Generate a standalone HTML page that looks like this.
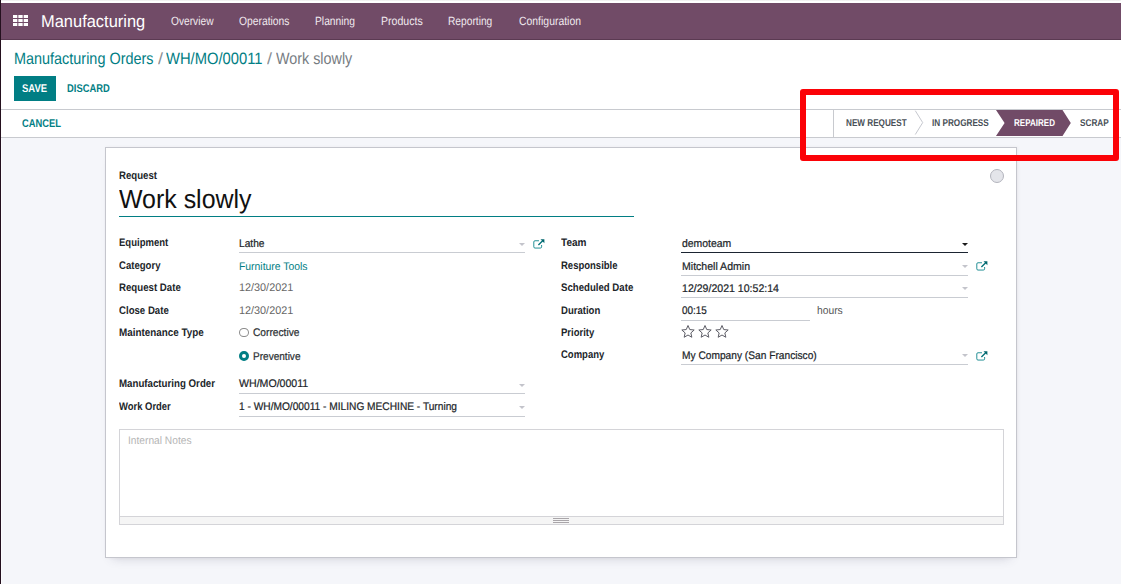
<!DOCTYPE html>
<html><head><meta charset="utf-8"><title>Odoo - Work slowly</title>
<style>
html,body{margin:0;padding:0}
body{width:1121px;height:584px;overflow:hidden;position:relative;background:#f5f6fa;font-family:"Liberation Sans",sans-serif}
.a{position:absolute;box-sizing:border-box}
.t{position:absolute;transform-origin:0 0;text-rendering:geometricPrecision;white-space:nowrap;line-height:normal;font-family:"Liberation Sans",sans-serif}
</style></head><body>
<!-- top strip -->
<div class="a" style="left:0;top:0;width:1121px;height:3px;background:linear-gradient(#e9e9e9,#fff 45%,#fff)"></div>
<!-- navbar -->
<div class="a" style="left:0;top:3px;width:1121px;height:37px;background:#714B67;border-bottom:1px solid #5b3a52"></div>
<!-- apps icon -->
<svg class="a" style="left:13px;top:15px" width="16" height="12" viewBox="0 0 16 12"><g fill="#fff"><rect x="0" y="0" width="4.3" height="3"/><rect x="5.35" y="0" width="4.3" height="3"/><rect x="10.7" y="0" width="4.3" height="3"/><rect x="0" y="4" width="4.3" height="3"/><rect x="5.35" y="4" width="4.3" height="3"/><rect x="10.7" y="4" width="4.3" height="3"/><rect x="0" y="8" width="4.3" height="3"/><rect x="5.35" y="8" width="4.3" height="3"/><rect x="10.7" y="8" width="4.3" height="3"/></g></svg>
<div class="a" style="left:1px;top:40px;width:1px;height:544px;background:rgba(255,255,255,.7)"></div>
<!-- control panel -->
<div class="a" style="left:0;top:40px;width:1121px;height:70px;background:#fff;border-bottom:1px solid #c8cacf"></div>
<div class="a" style="left:14px;top:76px;width:42px;height:25px;background:#017e84"></div>
<!-- statusbar -->
<div class="a" style="left:0;top:110px;width:1121px;height:28px;background:#fff;border-bottom:1px solid #c8cacf"></div>
<div class="a" style="left:833px;top:110px;width:1px;height:27px;background:#c8cacf"></div>
<svg class="a" style="left:833px;top:109px" width="288" height="29" viewBox="0 0 288 29">
<polyline points="82.3,1.7 89.7,13.6 82.3,25.5" fill="none" stroke="#c6c8cf" stroke-width="1"/>
<polygon points="163,1 229.5,1 237.8,14 229.5,27 163,27 171.6,14" fill="#714B67"/>
</svg>
<!-- sheet -->
<div class="a" style="left:105px;top:147px;width:912px;height:411px;background:#fff;border:1px solid #c5c6cd;box-shadow:0 7px 10px -7px rgba(60,60,90,.22),1px 0 3px rgba(110,100,90,.07)"></div>
<!-- kanban state circle -->
<div class="a" style="left:990px;top:169px;width:14px;height:14px;border-radius:50%;background:#e4e5ea;border:1px solid #b3b4bd"></div>
<!-- title underline -->
<div class="a" style="left:119px;top:216px;width:515px;height:1px;background:#017e84"></div>
<!-- left field underlines -->
<div class="a" style="left:239px;top:252px;width:286px;height:1px;background:#c9ccd2"></div>
<div class="a" style="left:239px;top:393px;width:286px;height:1px;background:#c9ccd2"></div>
<div class="a" style="left:239px;top:416px;width:286px;height:1px;background:#c9ccd2"></div>
<div class="a" style="left:519px;top:243px;width:0;height:0;border-left:3px solid transparent;border-right:3px solid transparent;border-top:3px solid #c3c4cb"></div>
<div class="a" style="left:519px;top:384px;width:0;height:0;border-left:3px solid transparent;border-right:3px solid transparent;border-top:3px solid #c3c4cb"></div>
<div class="a" style="left:519px;top:406px;width:0;height:0;border-left:3px solid transparent;border-right:3px solid transparent;border-top:3px solid #c3c4cb"></div>
<svg class="a" style="left:533px;top:238.5px" width="12" height="10" viewBox="0 0 12 10"><path d="M6 1.75H2a1.2 1.2 0 0 0-1.2 1.2v4.9a1.2 1.2 0 0 0 1.2 1.2h5.4a1.2 1.2 0 0 0 1.2-1.2V6" fill="none" stroke="#0d858b" stroke-width="0.9"/><path d="M5.4 6.1L10.2 1.3" stroke="#017178" stroke-width="1.35" fill="none"/><path d="M7.5 0.3h3.9v3.9z" fill="#01666d"/></svg>
<!-- radios -->
<div class="a" style="left:239px;top:327.6px;width:9.8px;height:9.5px;border-radius:50%;border:0.9px solid #8c8c8c;background:#fff"></div>
<div class="a" style="left:239px;top:351.2px;width:9.8px;height:9.8px;border-radius:50%;border:3.4px solid #017e84;background:#fff"></div>
<!-- right field underlines -->
<div class="a" style="left:681px;top:252px;width:287px;height:1px;background:#1b2431"></div>
<div class="a" style="left:681px;top:275px;width:287px;height:1px;background:#c9ccd2"></div>
<div class="a" style="left:681px;top:297px;width:287px;height:1px;background:#c9ccd2"></div>
<div class="a" style="left:681px;top:320px;width:129px;height:1px;background:#c9ccd2"></div>
<div class="a" style="left:681px;top:364px;width:287px;height:1px;background:#c9ccd2"></div>
<div class="a" style="left:962px;top:243px;width:0;height:0;border-left:3px solid transparent;border-right:3px solid transparent;border-top:3px solid #1b1b1b"></div>
<div class="a" style="left:962px;top:265px;width:0;height:0;border-left:3px solid transparent;border-right:3px solid transparent;border-top:3px solid #c3c4cb"></div>
<div class="a" style="left:962px;top:287px;width:0;height:0;border-left:3px solid transparent;border-right:3px solid transparent;border-top:3px solid #c3c4cb"></div>
<div class="a" style="left:962px;top:354px;width:0;height:0;border-left:3px solid transparent;border-right:3px solid transparent;border-top:3px solid #c3c4cb"></div>
<svg class="a" style="left:975.5px;top:260.5px" width="12" height="10" viewBox="0 0 12 10"><path d="M6 1.75H2a1.2 1.2 0 0 0-1.2 1.2v4.9a1.2 1.2 0 0 0 1.2 1.2h5.4a1.2 1.2 0 0 0 1.2-1.2V6" fill="none" stroke="#0d858b" stroke-width="0.9"/><path d="M5.4 6.1L10.2 1.3" stroke="#017178" stroke-width="1.35" fill="none"/><path d="M7.5 0.3h3.9v3.9z" fill="#01666d"/></svg>
<svg class="a" style="left:975.5px;top:350.5px" width="12" height="10" viewBox="0 0 12 10"><path d="M6 1.75H2a1.2 1.2 0 0 0-1.2 1.2v4.9a1.2 1.2 0 0 0 1.2 1.2h5.4a1.2 1.2 0 0 0 1.2-1.2V6" fill="none" stroke="#0d858b" stroke-width="0.9"/><path d="M5.4 6.1L10.2 1.3" stroke="#017178" stroke-width="1.35" fill="none"/><path d="M7.5 0.3h3.9v3.9z" fill="#01666d"/></svg>
<svg class="a" style="left:679.90px;top:323.90px" width="16" height="16" viewBox="0 0 16 16"><polygon points="8.00,1.50 9.76,5.57 14.18,5.99 10.85,8.93 11.82,13.26 8.00,11.00 4.18,13.26 5.15,8.93 1.82,5.99 6.24,5.57" fill="none" stroke="#5d5d66" stroke-width="1" stroke-linejoin="round"/></svg><svg class="a" style="left:696.90px;top:323.90px" width="16" height="16" viewBox="0 0 16 16"><polygon points="8.00,1.50 9.76,5.57 14.18,5.99 10.85,8.93 11.82,13.26 8.00,11.00 4.18,13.26 5.15,8.93 1.82,5.99 6.24,5.57" fill="none" stroke="#5d5d66" stroke-width="1" stroke-linejoin="round"/></svg><svg class="a" style="left:714.00px;top:323.90px" width="16" height="16" viewBox="0 0 16 16"><polygon points="8.00,1.50 9.76,5.57 14.18,5.99 10.85,8.93 11.82,13.26 8.00,11.00 4.18,13.26 5.15,8.93 1.82,5.99 6.24,5.57" fill="none" stroke="#5d5d66" stroke-width="1" stroke-linejoin="round"/></svg>
<!-- notes -->
<div class="a" style="left:119px;top:429px;width:885px;height:96px;background:#fff;border:1px solid #d4d4d8"></div>
<div class="a" style="left:120px;top:516px;width:883px;height:8px;background:#f5f5f5;border-top:1px solid #d4d4d8"></div>
<div class="a" style="left:553px;top:518px;width:16px;height:1px;background:#a9a5a9"></div><div class="a" style="left:553px;top:520px;width:16px;height:1px;background:#a9a5a9"></div><div class="a" style="left:553px;top:522px;width:16px;height:1px;background:#a9a5a9"></div>
<!-- text -->
<span class="t" id="brand" style="left:40.75px;top:11.03px;font-size:17.2px;font-weight:400;color:#fff;transform:scale(0.9571,1);">Manufacturing</span>
<span class="t" id="m1" style="left:170.50px;top:14.14px;font-size:12px;font-weight:400;color:#f0e9ee;transform:scale(0.8497,1);">Overview</span>
<span class="t" id="m2" style="left:238.75px;top:14.14px;font-size:12px;font-weight:400;color:#f0e9ee;transform:scale(0.8603,1);">Operations</span>
<span class="t" id="m3" style="left:314.50px;top:14.14px;font-size:12px;font-weight:400;color:#f0e9ee;transform:scale(0.8562,1);">Planning</span>
<span class="t" id="m4" style="left:380.50px;top:14.14px;font-size:12px;font-weight:400;color:#f0e9ee;transform:scale(0.8816,1);">Products</span>
<span class="t" id="m5" style="left:448.25px;top:14.14px;font-size:12px;font-weight:400;color:#f0e9ee;transform:scale(0.8505,1);">Reporting</span>
<span class="t" id="m6" style="left:518.50px;top:14.14px;font-size:12px;font-weight:400;color:#f0e9ee;transform:scale(0.8685,1);">Configuration</span>
<span class="t" id="bc1" style="left:14.00px;top:50.46px;font-size:16.4px;font-weight:400;color:#017e84;transform:scale(0.8800,1);">Manufacturing Orders</span>
<span class="t" id="bc2" style="left:158.00px;top:50.46px;font-size:16.4px;font-weight:400;color:#8a8f94;transform:scale(1.0959,1);">/</span>
<span class="t" id="bc3" style="left:166.00px;top:50.46px;font-size:16.4px;font-weight:400;color:#017e84;transform:scale(0.9003,1);">WH/MO/00011</span>
<span class="t" id="bc4" style="left:267.00px;top:50.46px;font-size:16.4px;font-weight:400;color:#8a8f94;transform:scale(1.0959,1);">/</span>
<span class="t" id="bc5" style="left:275.50px;top:50.46px;font-size:16.4px;font-weight:400;color:#777c82;transform:scale(0.8752,1);">Work slowly</span>
<span class="t" id="save" style="left:22.25px;top:82.66px;font-size:11.2px;font-weight:700;color:#fff;transform:scale(0.8485,1);">SAVE</span>
<span class="t" id="discard" style="left:66.50px;top:82.66px;font-size:11.2px;font-weight:700;color:#017e84;transform:scale(0.8387,1);">DISCARD</span>
<span class="t" id="cancel" style="left:22.25px;top:117.66px;font-size:11.2px;font-weight:700;color:#017e84;transform:scale(0.8365,1);">CANCEL</span>
<span class="t" id="s1" style="left:846.00px;top:117.93px;font-size:9.8px;font-weight:700;color:#495057;transform:scale(0.8322,1);">NEW REQUEST</span>
<span class="t" id="s2" style="left:932.25px;top:117.93px;font-size:9.8px;font-weight:700;color:#495057;transform:scale(0.8338,1);">IN PROGRESS</span>
<span class="t" id="s3" style="left:1014.00px;top:117.93px;font-size:9.8px;font-weight:700;color:#fff;transform:scale(0.8215,1);">REPAIRED</span>
<span class="t" id="s4" style="left:1080.25px;top:117.93px;font-size:9.8px;font-weight:700;color:#495057;transform:scale(0.8383,1);">SCRAP</span>
<span class="t" id="lreq" style="left:119.10px;top:169.84px;font-size:11px;font-weight:700;color:#212529;transform:scale(0.8754,1);">Request</span>
<span class="t" id="title" style="left:119.10px;top:183.70px;font-size:26.3px;font-weight:400;color:#111;transform:scale(0.9479,1);">Work slowly</span>
<span class="t" id="l1" style="left:119.10px;top:236.84px;font-size:11px;font-weight:700;color:#212529;transform:scale(0.8664,1);">Equipment</span>
<span class="t" id="l2" style="left:119.10px;top:259.85px;font-size:11px;font-weight:700;color:#212529;transform:scale(0.8702,1);">Category</span>
<span class="t" id="l3" style="left:119.10px;top:281.85px;font-size:11px;font-weight:700;color:#212529;transform:scale(0.8784,1);">Request Date</span>
<span class="t" id="l4" style="left:119.10px;top:304.60px;font-size:11px;font-weight:700;color:#212529;transform:scale(0.8750,1);">Close Date</span>
<span class="t" id="l5" style="left:119.10px;top:326.60px;font-size:11px;font-weight:700;color:#212529;transform:scale(0.8964,1);">Maintenance Type</span>
<span class="t" id="l6" style="left:119.10px;top:378.05px;font-size:11px;font-weight:700;color:#212529;transform:scale(0.8824,1);">Manufacturing Order</span>
<span class="t" id="l7" style="left:119.10px;top:401.05px;font-size:11px;font-weight:700;color:#212529;transform:scale(0.8580,1);">Work Order</span>
<span class="t" id="v1" style="left:239.10px;top:237.59px;font-size:11px;font-weight:400;color:#212529;transform:scale(0.9262,1);-webkit-text-stroke:0.22px currentColor;">Lathe</span>
<span class="t" id="v2" style="left:239.10px;top:260.85px;font-size:11px;font-weight:400;color:#017e84;transform:scale(0.9440,1);">Furniture Tools</span>
<span class="t" id="v3" style="left:239.10px;top:281.85px;font-size:11px;font-weight:400;color:#666;transform:scale(0.9852,1);">12/30/2021</span>
<span class="t" id="v4" style="left:239.10px;top:304.60px;font-size:11px;font-weight:400;color:#666;transform:scale(0.9852,1);">12/30/2021</span>
<span class="t" id="v5" style="left:253.35px;top:326.60px;font-size:11px;font-weight:400;color:#2b2f33;transform:scale(0.9267,1);-webkit-text-stroke:0.22px currentColor;">Corrective</span>
<span class="t" id="v6" style="left:253.35px;top:351.15px;font-size:11px;font-weight:400;color:#2b2f33;transform:scale(0.9137,1);-webkit-text-stroke:0.22px currentColor;">Preventive</span>
<span class="t" id="v7" style="left:239.10px;top:378.35px;font-size:11px;font-weight:400;color:#212529;transform:scale(0.9626,1);-webkit-text-stroke:0.22px currentColor;">WH/MO/00011</span>
<span class="t" id="v8" style="left:239.10px;top:400.60px;font-size:11px;font-weight:400;color:#212529;transform:scale(0.9247,1);-webkit-text-stroke:0.22px currentColor;">1 - WH/MO/00011 - MILING MECHINE - Turning</span>
<span class="t" id="r1" style="left:561.35px;top:236.84px;font-size:11px;font-weight:700;color:#212529;transform:scale(0.9133,1);">Team</span>
<span class="t" id="r2" style="left:561.35px;top:259.85px;font-size:11px;font-weight:700;color:#212529;transform:scale(0.8638,1);">Responsible</span>
<span class="t" id="r3" style="left:561.35px;top:281.85px;font-size:11px;font-weight:700;color:#212529;transform:scale(0.8754,1);">Scheduled Date</span>
<span class="t" id="r4" style="left:561.35px;top:304.60px;font-size:11px;font-weight:700;color:#212529;transform:scale(0.8677,1);">Duration</span>
<span class="t" id="r5" style="left:561.35px;top:326.60px;font-size:11px;font-weight:700;color:#212529;transform:scale(0.8633,1);">Priority</span>
<span class="t" id="r6" style="left:561.35px;top:348.85px;font-size:11px;font-weight:700;color:#212529;transform:scale(0.8628,1);">Company</span>
<span class="t" id="w1" style="left:682.00px;top:237.84px;font-size:11px;font-weight:400;color:#212529;transform:scale(0.9474,1);-webkit-text-stroke:0.22px currentColor;">demoteam</span>
<span class="t" id="w2" style="left:682.00px;top:260.85px;font-size:11px;font-weight:400;color:#212529;transform:scale(0.9588,1);-webkit-text-stroke:0.22px currentColor;">Mitchell Admin</span>
<span class="t" id="w3" style="left:682.00px;top:282.85px;font-size:11px;font-weight:400;color:#212529;transform:scale(0.9610,1);-webkit-text-stroke:0.22px currentColor;">12/29/2021 10:52:14</span>
<span class="t" id="w4" style="left:682.00px;top:304.60px;font-size:11px;font-weight:400;color:#212529;transform:scale(0.8990,1);-webkit-text-stroke:0.22px currentColor;">00:15</span>
<span class="t" id="w5" style="left:816.75px;top:304.60px;font-size:11px;font-weight:400;color:#555;transform:scale(0.9353,1);">hours</span>
<span class="t" id="w6" style="left:682.00px;top:349.60px;font-size:11px;font-weight:400;color:#212529;transform:scale(0.9261,1);-webkit-text-stroke:0.22px currentColor;">My Company (San Francisco)</span>
<span class="t" id="notes" style="left:128.10px;top:434.60px;font-size:11px;font-weight:400;color:#b5b5b5;transform:scale(0.9272,1);">Internal Notes</span>
<!-- red highlight -->
<div class="a" style="left:800px;top:89px;width:319px;height:72px;border:6px solid #fb0207;border-radius:3px"></div>
<!-- left edge line -->
<div class="a" style="left:0;top:0;width:1px;height:584px;background:#24101e"></div>
</body></html>
